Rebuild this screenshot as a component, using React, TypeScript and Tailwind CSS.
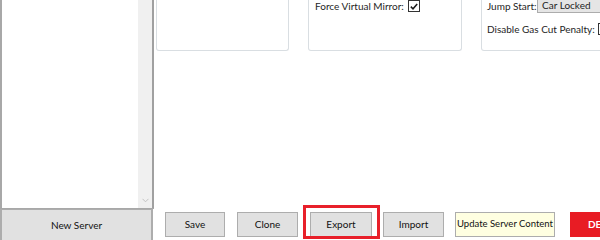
import React from 'react';

const Check: React.FC<{ className?: string }> = ({ className = '' }) => (
  <span className={`flex h-[12px] w-[12px] shrink-0 items-center justify-center border border-[#333333] bg-white ${className}`}>
    <svg width="8" height="7" viewBox="0 0 8 7" fill="none">
      <path d="M0.8 3.6 L3 5.8 L7.2 0.9" stroke="#1b1b1b" strokeWidth="1.5" />
    </svg>
  </span>
);

const Btn: React.FC<{ label: string; w: string; className?: string }> = ({ label, w, className = '' }) => (
  <button
    className={`h-[25px] ${w} shrink-0 whitespace-nowrap border border-[#adadad] text-[#111] ${className || 'bg-[#e1e1e1] text-[10px]'}`}
  >
    {label}
  </button>
);

const App: React.FC = () => {
  return (
    <div
      className="flex h-[240px] w-[600px] overflow-hidden whitespace-nowrap bg-white text-[10px] text-[#1e1e1e]"
      style={{ fontFamily: 'Lato, "Noto Sans", sans-serif' }}
    >
      {/* Server list */}
      <div className="flex w-[154px] shrink-0 flex-col">
        <div className="flex flex-1 border-b border-[#a8a8a8]">
          <div className="flex-1 border-l-2 border-[#a8a8a8] bg-white" />
          <div className="flex w-[14px] flex-col items-center justify-end bg-[#f0f0f0] pb-[5px]">
            <svg width="7" height="5" viewBox="0 0 7 5" fill="none">
              <path d="M0.5 0.8 L3.5 3.8 L6.5 0.8" stroke="#c2c2c2" strokeWidth="1" />
            </svg>
          </div>
          <div className="w-[2px] bg-[#a0a0a0]" />
        </div>
        <button className="h-[31px] w-[153px] border-x-2 border-t border-[#adadad] bg-[#e1e1e1] text-[10px] text-[#111]">
          New Server
        </button>
      </div>

      {/* Settings + actions */}
      <div className="flex flex-1 flex-col">
        <div className="flex h-[51px] gap-[19px] pl-[2px]">
          <div className="w-[133px] shrink-0 rounded-b-[3px] border-x border-b border-[#d9dee2]" />
          <div className="w-[154px] shrink-0 rounded-b-[3px] border-x border-b border-[#d9dee2] pl-[6px]">
            <div className="-mt-[2px] flex items-center">
              <span className="w-[93px] shrink-0 leading-[16px]">Force Virtual Mirror:</span>
              <Check />
            </div>
          </div>
          <div className="w-[160px] shrink-0 rounded-b-[3px] border-x border-b border-[#d9dee2] pl-[5px]">
            <div className="flex h-[13px] items-end">
              <span className="-mb-[1px] w-[50px] shrink-0 leading-[16px]">Jump Start:</span>
              <div className="flex h-[16px] flex-1 items-end border border-t-0 border-[#acacac] bg-[#e5e5e5] pl-[4px] leading-[16px]">
                <span className="-mb-[1px]">Car Locked</span>
              </div>
            </div>
            <div className="mt-[8px] flex items-center">
              <span className="w-[111px] shrink-0 leading-[16px]">Disable Gas Cut Penalty:</span>
              <Check />
            </div>
          </div>
        </div>

        <div className="flex-1" />

        <div className="mb-[3px] flex items-end pl-[11px]">
          <Btn label="Save" w="w-[60px]" />
          <Btn label="Clone" w="w-[61px]" className="ml-[12px] bg-[#e1e1e1] text-[10px]" />
          <div className="relative ml-[12px]">
            <Btn label="Export" w="w-[62px]" />
            <span className="pointer-events-none absolute -bottom-[2px] -left-[7px] -right-[8px] -top-[7px] border-[3px] border-[#e8202a]" />
          </div>
          <Btn label="Import" w="w-[61px]" className="ml-[11px] bg-[#e1e1e1] text-[10px]" />
          <Btn label="Update Server Content" w="w-[100px]" className="ml-[11px] bg-[#ffffe1] text-[9.5px]" />
          <button className="ml-[15px] h-[25px] w-[72px] shrink-0 bg-[#e81c24] text-[10px] font-bold text-white">
            DELETE
          </button>
        </div>
      </div>
    </div>
  );
};

export default App;
